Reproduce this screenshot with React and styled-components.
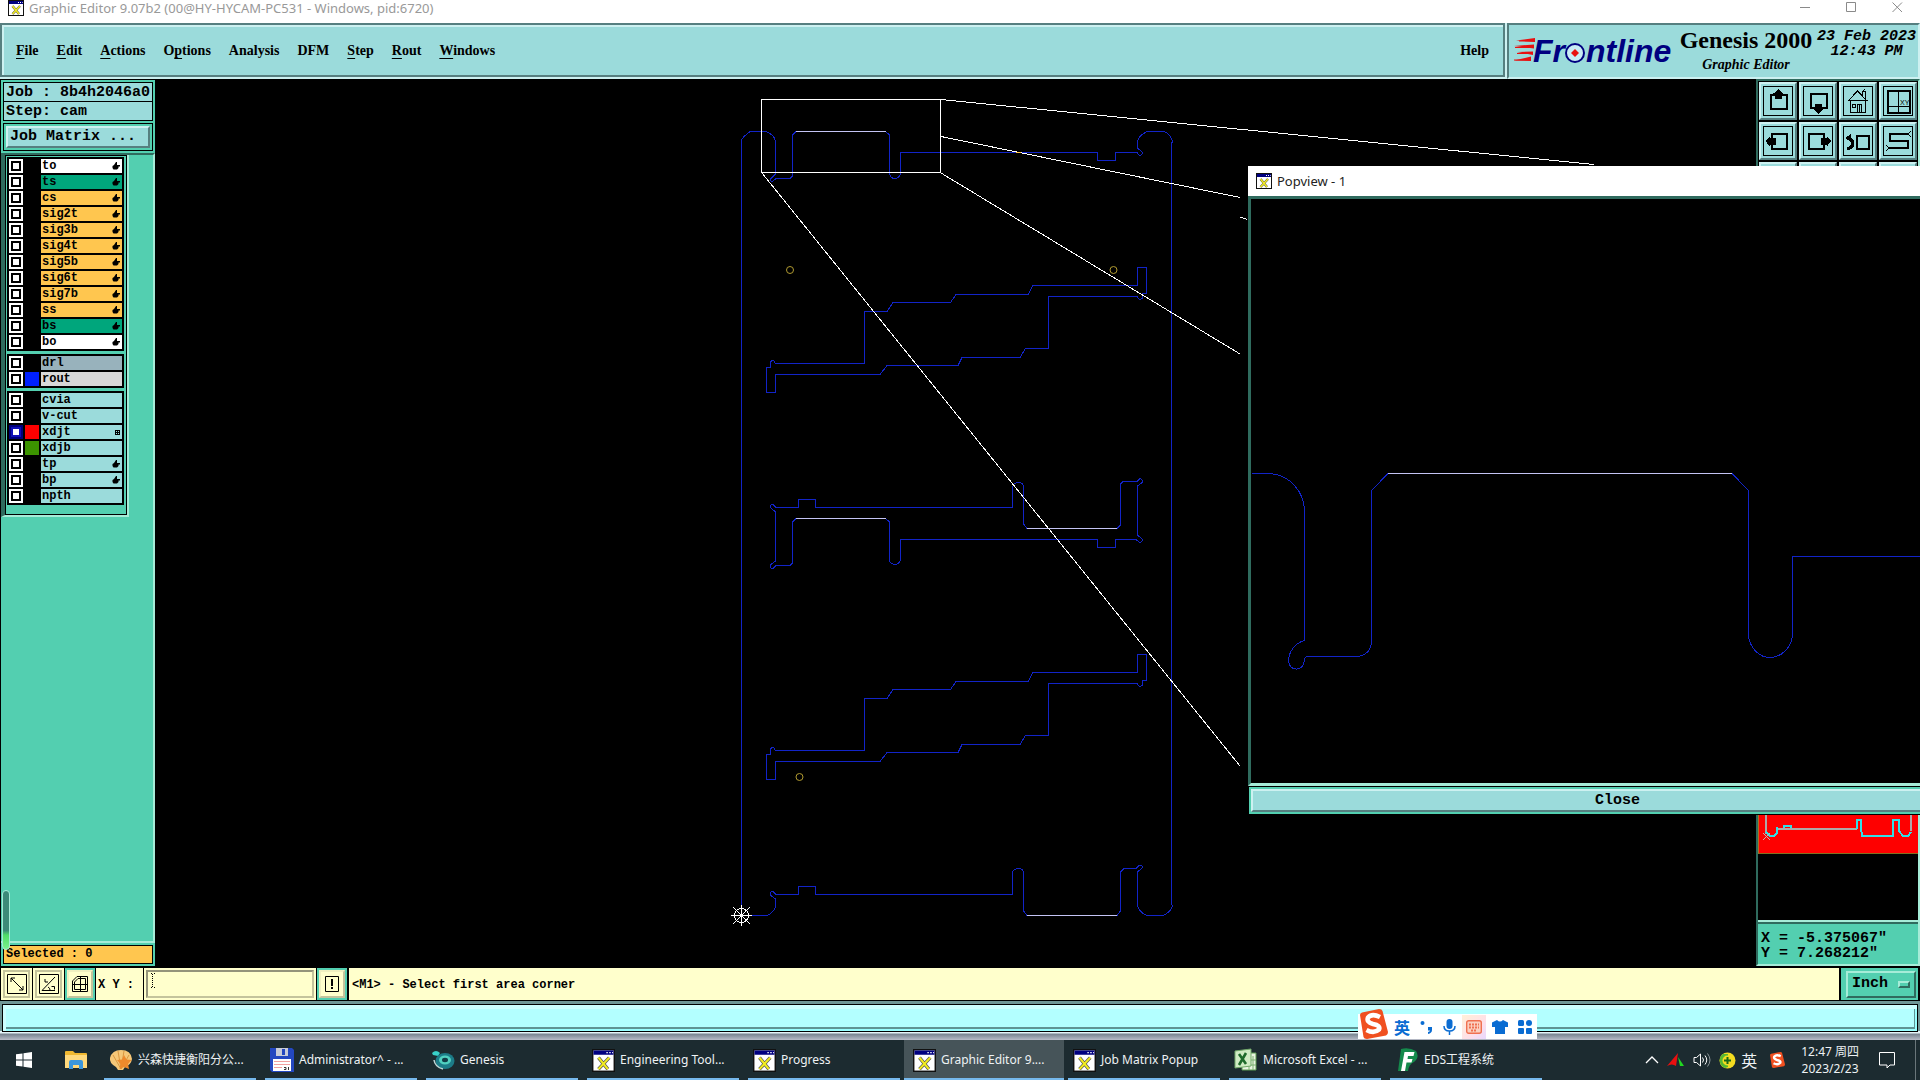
import React, { useState } from "react";
import styled, { createGlobalStyle, css } from "styled-components";

const c = {
  aqua: "#9bdbdb",
  aquaLight: "#cdf1f1",
  aquaDark: "#567f80",
  teal: "#53cfb0",
  tealLight: "#a6ecd8",
  tealDark: "#2f6b5e",
  orange: "#ffc64f",
  green: "#00a67c",
  cream: "#ffffcc",
  creamDark: "#c4c49c",
  trace: "#1224c8",
  pick: "#c4c4f4",
  navy: "#000080",
  bar: "#1c2b30",
};

const ui = `"Noto Sans", "Noto Sans CJK SC", sans-serif`;
const mono = `"Liberation Mono", monospace`;
const serif = `"Liberation Serif", serif`;

const Global = createGlobalStyle`
  * { box-sizing: border-box; }
  html, body, #root { height: 100%; margin: 0; }
  body { background: #000; overflow: hidden; }
  button, input, select { font: inherit; color: inherit; margin: 0; padding: 0; border: 0; border-radius: 0; background: none; }
  svg { display: block; }
`;

const raised = (light, dark, w = 2) => css`
  border: ${w}px solid;
  border-color: ${light} ${dark} ${dark} ${light};
`;

const Screen = styled.div`
  display: flex;
  flex-direction: column;
  height: 100%;
  min-height: 640px;
  color: #000;
  font: 12px/16px ${ui};
`;

/* window title */
const TitleBar = styled.header`
  display: flex;
  justify-content: space-between;
  height: 23px;
  padding: 0 17px 0 8px;
  background: #fff;
  color: #999;
`;
const TitleName = styled.h1`
  display: flex;
  gap: 5px;
  margin: 0;
  font: 13px/16px ${ui};
`;
const TitleButtons = styled.div`
  display: flex;
  gap: 35px;
`;
const TitleButton = styled.button`
  width: 11px;
  height: 15px;
`;

/* menu row */
const MenuRow = styled.div`
  display: flex;
  height: 56px;
  background: ${c.aquaLight};
`;
const MenuBar = styled.nav`
  flex: 1;
  display: flex;
  align-items: center;
  gap: 18px;
  padding: 2px 14px 0;
  margin: 0 2px 2px 0;
  background: ${c.aqua};
  border: 2px solid ${c.aquaDark};
  box-shadow: inset 2px 2px 0 ${c.aquaLight};
`;
const MenuButton = styled.button`
  font: bold 14px/20px ${serif};
  margin-left: ${(p) => (p.$end ? "auto" : "0")};
  u { text-underline-offset: 3px; }
`;
const Brand = styled.section`
  display: flex;
  width: 413px;
  padding: 0 2px 0 4px;
  background: ${c.aqua};
  border: 2px solid;
  border-color: ${c.aquaDark} ${c.aquaLight} ${c.aquaLight} ${c.aquaDark};
`;
const BrandText = styled.div`
  flex: 1;
  text-align: center;
`;
const Product = styled.div`
  font: bold 24px/30px ${serif};
  white-space: nowrap;
`;
const Module = styled.div`
  font: italic bold 14px/20px ${serif};
`;
const Clock = styled.div`
  padding-top: 4px;
  font: italic bold 15px/15px ${mono};
  text-align: center;
  white-space: nowrap;
`;

/* main area */
const Main = styled.main`
  position: relative;
  flex: 1;
  display: flex;
  min-height: 0;
  overflow: hidden;
  background: #000;
`;
const Side = styled.aside`
  display: flex;
  flex-direction: column;
  width: 154px;
  margin: 1px 0 2px 1px;
  background: ${c.teal};
  position: relative;
`;
const JobInfo = styled.div`
  margin: 2px 2px 0;
  border: 1px solid #000;
  background: ${c.aqua};
  font: bold 15px/20px ${mono};
  white-space: nowrap;
  div { height: 18px; padding-left: 2px; }
  div + div { border-top: 1px solid #000; height: 19px; }
`;
const MatrixFrame = styled.div`
  margin: 2px;
  padding: 2px;
  border: 1px solid #000;
`;
const MatrixButton = styled.button`
  display: block;
  width: 100%;
  height: 22px;
  padding-left: 2px;
  background: ${c.aqua};
  ${raised(c.aquaLight, c.aquaDark)}
  font: bold 15px/18px ${mono};
  text-align: left;
`;
const LayerArea = styled.div`
  flex: 1;
  border-top: 2px solid ${c.tealDark};
  border-right: 2px solid ${c.tealLight};
  border-bottom: 2px solid ${c.tealLight};
`;
const LayerPanel = styled.div`
  width: 128px;
  border-left: 4px solid ${c.tealDark};
  border-right: 2px solid ${c.tealLight};
  border-bottom: 2px solid ${c.tealLight};
`;
const LayerInner = styled.div`
  display: flex;
  flex-direction: column;
  gap: 3px;
  padding: 1px 2px 9px 1px;
  border: 1px solid #000;
`;
const LayerGroup = styled.ul`
  display: flex;
  flex-direction: column;
  gap: 2px;
  margin: 0;
  padding: 2px;
  list-style: none;
  background: #000;
`;
const LayerRow = styled.li`
  display: flex;
  gap: 2px;
  height: 14px;
`;
const LayerTick = styled.input`
  appearance: none;
  width: 14px;
  height: 14px;
  background: #fff;
  border: 2px solid #fff;
  box-shadow: inset 0 0 0 2px #000;
  &:checked {
    border-color: #00007c;
    box-shadow: inset 0 0 0 2px #1010b8;
  }
`;
const LayerColour = styled.span`
  width: 14px;
  background: ${(p) => p.$fill};
`;
const LayerName = styled.label`
  flex: 1;
  display: flex;
  align-items: center;
  justify-content: space-between;
  padding: 0 2px 0 1px;
  background: ${(p) => p.$fill};
  font: bold 12px/14px ${mono};
`;
const Selected = styled.div`
  margin: 2px;
  padding-left: 2px;
  height: 19px;
  border: 1px solid #000;
  background: ${c.orange};
  font: bold 12px/17px ${mono};
`;
const Gauge = styled.div`
  position: absolute;
  left: 1px;
  bottom: 16px;
  width: 8px;
  height: 60px;
  border: 1px solid ${c.tealLight};
  border-radius: 4px;
  background: linear-gradient(#3c8a78 68%, #4fdc68 76%, #7cf08c);
`;
const CanvasArea = styled.section`
  flex: 1;
  min-width: 0;
  overflow: hidden;
`;
const Right = styled.aside`
  display: flex;
  flex-direction: column;
  width: 164px;
  margin-bottom: 2px;
  border-left: 2px solid ${c.tealDark};
  border-right: 2px solid ${c.tealLight};
  border-bottom: 2px solid ${c.tealLight};
  border-top: 2px solid ${c.tealDark};
`;
const Tools = styled.div`
  display: grid;
  grid-template-columns: repeat(4, 38px);
  gap: 2px;
  padding: 1px;
`;
const ToolButton = styled.button`
  width: 38px;
  height: 38px;
  background: ${c.aqua};
  ${raised(c.aquaLight, c.aquaDark)}
  svg { margin: -2px; }
`;
const Overview = styled.div`
  flex: 1;
  min-height: 0;
  display: flex;
  flex-direction: column;
  justify-content: flex-end;
  border-bottom: 2px solid ${c.tealLight};
`;
const Thumb = styled.div`
  height: 120px;
  margin-bottom: 66px;
  background: #fe0000;
  border-left: 1px solid #b07020;
  border-bottom: 1px solid #807020;
`;
const Coords = styled.div`
  height: 42px;
  padding: 7px 0 0 3px;
  background: ${c.teal};
  border-top: 2px solid ${c.tealDark};
  font: bold 15px/15px ${mono};
  white-space: pre;
`;

/* popup window */
const Popup = styled.section`
  position: absolute;
  left: 65%;
  top: 87px;
  width: 738px;
  background: #000;
`;
const PopupTitle = styled.h2`
  display: flex;
  align-items: center;
  gap: 5px;
  height: 30px;
  margin: 0;
  padding-left: 8px;
  background: #fff;
  color: #222;
  font: 13px/16px ${ui};
`;
const PopupView = styled.div`
  height: 590px;
  border-top: 3px solid ${c.tealDark};
  border-left: 3px solid ${c.tealDark};
  border-bottom: 3px solid ${c.tealLight};
`;
const PopupFoot = styled.div`
  margin: 1px 0 1px 1px;
  padding: 2px;
  background: ${c.teal};
`;
const CloseButton = styled.button`
  display: block;
  width: 100%;
  height: 23px;
  padding-top: 1px;
  background: ${c.aqua};
  ${raised(c.aquaLight, c.aquaDark)}
  font: bold 15px/18px ${mono};
`;

/* command line */
const Command = styled.div`
  display: flex;
  gap: 1px;
  height: 33px;
  padding: 0 2px 1px 1px;
  background: #000;
  font: bold 12px/16px ${mono};
`;
const CommandButton = styled.button`
  width: ${(p) => (p.$teal ? "30px" : "31px")};
  background: ${c.cream};
  border: 2px solid ${(p) => (p.$teal ? c.teal : c.cream)};
  padding: 0;
  span {
    display: grid;
    place-items: center;
    height: 28px;
    ${raised("#f0f0c0", c.creamDark)}
    ${(p) => !p.$teal && css`border-color: ${c.creamDark};`}
  }
`;
const XyLabel = styled.label`
  width: 47px;
  padding: 9px 0 0 2px;
  background: ${c.cream};
`;
const XyField = styled.div`
  position: relative;
  display: flex;
  width: 172px;
  padding: 2px;
  background: ${c.cream};
  svg { position: absolute; left: 6px; top: 5px; pointer-events: none; }
`;
const XyBox = styled.input`
  flex: 1;
  min-width: 0;
  padding: 0 5px;
  border: 2px solid;
  border-color: #94947a ${c.creamDark} ${c.creamDark} #94947a;
  outline: none;
`;
const Prompt = styled.output`
  flex: 1;
  margin: 0 1px;
  padding: 9px 3px 0;
  background: ${c.cream};
`;
const UnitBox = styled.div`
  display: flex;
  align-items: center;
  width: 77px;
  padding: 2px 2px 2px 5px;
  background: ${c.teal};
`;
const UnitField = styled.div`
  flex: 1;
  display: flex;
  align-items: center;
  height: 27px;
  padding: 0 4px;
  ${raised(c.tealLight, c.tealDark)}
  select {
    flex: 1;
    min-width: 0;
    appearance: none;
    font: bold 15px/20px ${mono};
  }
`;
const UnitMark = styled.span`
  width: 12px;
  height: 7px;
  ${raised(c.tealLight, c.tealDark)}
`;

const MessageRow = styled.div`
  position: relative;
  height: 39px;
  padding: 2px;
  background: linear-gradient(#6f9696 0 30px, #e4f4f8 30px 32px, #788490 33px, #b8bcc8 100%);
`;
const MessageBar = styled.div`
  height: 28px;
  margin-top: 1px;
  background: #b3ffff;
  border: 1px solid #000;
  box-shadow: inset 3px 4px 0 #ccffff, inset -2px -2px 0 #9ff, inset -3px -4px 0 #5f9494;
`;
const ImeBar = styled.div`
  position: absolute;
  right: 383px;
  bottom: 1px;
  display: flex;
  align-items: center;
  gap: 10px;
  height: 25px;
  padding: 0 5px 0 36px;
  background: #fff;
  color: #0a6cd2;
  font: bold 16px/24px "Noto Sans CJK SC", sans-serif;
`;
const ImeLogo = styled.div`
  position: absolute;
  left: 0;
  bottom: 0;
`;
const ImeKey = styled.span`
  padding: 5px 4px;
  margin: 0 -4px;
  background: linear-gradient(135deg, #fff0d8, #ffe0e8 60%, #e8d8ff);
`;

/* taskbar */
const Taskbar = styled.footer`
  display: flex;
  height: 40px;
  background: ${c.bar};
  color: #eef2f4;
  font: 12px/16px ${ui};
`;
const Launch = styled.button`
  display: grid;
  place-items: center;
  width: 52px;
  padding-right: 5px;
`;
const Tasks = styled.div`
  flex: 1;
  display: flex;
  min-width: 0;
  overflow: hidden;
`;
const Task = styled.button`
  display: flex;
  align-items: center;
  gap: 5px;
  flex: 0 0 ${(p) => (p.$active ? "160px" : "152px")};
  margin-right: ${(p) => (p.$active ? "4px" : "9px")};
  margin-left: ${(p) => (p.$active ? "-5px" : "0")};
  padding: 2px 5px 0;
  padding-left: ${(p) => (p.$active ? "9px" : "5px")};
  white-space: nowrap;
  background: ${(p) => (p.$active ? "#465459" : "none")};
  border-bottom: 2px solid #76b9ed;
  svg { flex: none; }
`;
const Tray = styled.div`
  display: flex;
  align-items: center;
  gap: 8px;
  padding-right: 4px;
`;
const ImeState = styled.span`
  margin: 0 4px 0 -3px;
  font: 16px/20px "Noto Sans CJK SC", sans-serif;
`;
const Time = styled.div`
  margin: 0 12px 0 8px;
  text-align: center;
  line-height: 17px;
`;
const Notice = styled.button`
  padding-right: 20px;
  border-right: 1px solid #6a767a;
  height: 100%;
`;

/* ---------- icons ---------- */
const XIcon = ({ s = 16 }) => (
  <svg width={s} height={s} viewBox="0 0 16 16" aria-hidden="true">
    <rect width="16" height="16" fill="#111" />
    <rect x="1" y="1" width="14" height="14" fill="#fff" />
    <rect x="1" y="1" width="14" height="3" fill={c.navy} />
    <path d="M10 2.5h1M12 2.5h1M14 2.5h.6" stroke="#fff" />
    <path d="M4.5 6l6.5 8M12 6l-7.5 8" stroke="#555" strokeWidth="2.4" />
    <path d="M4.5 6l6.5 8M12 6l-7.5 8" stroke="#f2ec20" strokeWidth="1.5" />
  </svg>
);

const Hand = () => (
  <svg width="8" height="8" viewBox="0 0 8 8" aria-hidden="true">
    <path d="M4 0H5V3H8V4.500H6.500V6L5 7.500H1.500L0.500 6V4L2 3z" fill="#000" />
  </svg>
);
const GridMark = () => (
  <svg width="5" height="5" viewBox="0 0 5 5" shapeRendering="crispEdges" aria-hidden="true">
    <path d="M.5 .5H4.5V4.5H.5zM2.5 0V5M0 2.5H5" fill="none" stroke="#000" />
  </svg>
);

const toolDrawings = {
  "Pan up": <><path d="M12 13h16v14H12z" strokeWidth="2" /><path d="M19.500 7l5 4.500h-1.500V17h-7v-5.500H14.500z" fill="#000" stroke="none" /></>,
  "Pan down": <><path d="M12 12h16v14H12z" strokeWidth="2" /><path d="M19.500 32l5-5h-1.500V22h-7v5H14.500z" fill="#000" stroke="none" /></>,
  Home: <path d="M9 18.500h20M9 19L18.500 9L28 19M11.500 18.500V30.500H26.500V18.500M23.500 14V9.500h3V17M24 9l2-2M18.500 30V22.500h4V30M20.500 23v7M13.500 22h3v3h-3z" />,
  "Zoom window": <><path d="M9 9h22v22H9z" strokeWidth="2" /><path d="M19.500 9v22M9 24.500h22" /><text x="21" y="23" fontSize="7" fontFamily="Liberation Sans" fill="#000" stroke="none">XY</text></>,
  "Pan left": <><path d="M13 12h15v15H13z" strokeWidth="2" /><path d="M6.500 19l4.500-5v2h6v7h-6v2z" fill="#000" stroke="none" /></>,
  "Pan right": <><path d="M10 12h15v15H10z" strokeWidth="2" /><path d="M32 19l-4.500-5v2h-6v7h6v2z" fill="#000" stroke="none" /></>,
  "Previous view": <><path d="M18 14h12v13H18z" strokeWidth="2" /><path d="M8 26h3q3-2 3-5t-4-5" strokeWidth="3" /><path d="M6.500 16l5-4v8z" fill="#000" stroke="none" /></>,
  Snap: <><path d="M30 12H11v7H29v7H10" strokeWidth="2" /><path d="M29 12l3-3M29 12l3 3M10 26l-3-3M10 26l-3 3" /></>,
  "Zoom in": <path d="M12 12h14v14H12z" strokeWidth="2" />,
  "Zoom out": <path d="M12 12h14v14H12z" strokeWidth="2" />,
  Fit: <path d="M12 12h14v14H12z" strokeWidth="2" />,
  Redraw: <path d="M12 12h14v14H12z" strokeWidth="2" />,
};

const ToolArt = ({ children }) => (
  <svg width="38" height="38" viewBox="0 0 38 38" fill="none" stroke="#000" shapeRendering="crispEdges" aria-hidden="true">
    <path d="M4.500 4.500h29v29h-29z" />
    {children}
  </svg>
);

const CommandArt = ({ d }) => (
  <svg width="20" height="20" viewBox="0 0 20 20" fill="none" stroke="#000" aria-hidden="true">
    <path d={d} />
  </svg>
);

const Logo = () => (
  <svg width="162" height="50" viewBox="0 0 162 50" role="img" aria-label="Frontline">
    <g fill="#e81010">
      <path d="M3 15.500L22 13V17zM1 21L21 19.500V23.500zM4 27L20 26.500V30zM1 35.500L18 31.500V36z" />
      <path d="M6 16H22M2 22.500H21M4 28.500H19M1 35H18" stroke="#e81010" />
    </g>
    <g fontFamily="Liberation Sans, sans-serif" fontWeight="bold" fontStyle="italic" fontSize="32" fill={c.navy}>
      <text x="20" y="37">Fr</text>
      <text x="73" y="37">ntline</text>
    </g>
    <ellipse cx="62" cy="28" rx="9" ry="9" fill="#c8ecf4" stroke={c.navy} strokeWidth="2" />
    <path d="M62 24L66 28L62 32L58 28z" fill="#e81010" />
  </svg>
);

const S = ({ s = 16 }) => (
  <svg width={s} height={s} viewBox="0 0 30 30" aria-hidden="true">
    <path d="M2 6Q2 4 4 3.500L21 0Q24 0 24.500 2L30 23Q30 26 28 26.500L9 30Q6 30 5.500 28z" fill="#f05020" />
    <path d="M22 8Q14 4 10 8.500Q8 13 15 15Q23 16.500 21 20.500Q16 25 8.500 21" fill="none" stroke="#fff" strokeWidth="4.500" />
  </svg>
);

const taskIcons = {
  shell: (
    <svg width="24" height="24" viewBox="0 0 24 24">
      <path d="M12 2Q22 2 23 11Q22 17 16 19L14 22H9L7 19Q0 15 1 10Q3 2 12 2z" fill="#f6c878" />
      <path d="M12 21L4 7M12 21L9 3M12 21L15 3M12 21L20 7" stroke="#d89840" />
      <path d="M15 7l2.500 4.500 5 .5-3.500 4 1 5-5-2-4.500 2 1-5-3.500-4 5-.5z" fill="#ee8a2c" />
    </svg>
  ),
  floppy: (
    <svg width="24" height="24" viewBox="0 0 24 24">
      <path d="M0 0H22L24 2V24H2L0 22z" fill="#2448c0" />
      <path d="M6 0H18V8H6z" fill="#c8ccd8" /><path d="M12 1h3v6h-3z" fill="#2448c0" />
      <path d="M3 11H21V23H3z" fill="#fff" /><path d="M4 13.500H20M4 16.500H20M4 19.500H12" stroke="#f0a0a0" />
      <path d="M14 19.500h2v2h-2M18.500 19v3" stroke="#333" fill="none" />
    </svg>
  ),
  genesis: (
    <svg width="24" height="24" viewBox="0 0 24 24">
      <path d="M1 5Q5 1 9 5L7 8L2 7z" fill="#38d0c8" />
      <ellipse cx="14" cy="13" rx="9.500" ry="8" fill="#1c7c88" />
      <ellipse cx="14" cy="12" rx="6" ry="4.500" fill="#50d0c0" />
      <ellipse cx="14" cy="12" rx="3" ry="2.200" fill="#123c48" />
      <path d="M3 12Q4 19 12 21" stroke="#c0d8d8" strokeWidth="1.500" fill="none" />
    </svg>
  ),
  x: <XIcon s={23} />,
  excel: (
    <svg width="24" height="24" viewBox="0 0 24 24">
      <path d="M8 5H22V22H8z" fill="#e8f4e0" stroke="#5a9a50" />
      <path d="M15 8v14M19 8v14M9 12H22M9 17H22" stroke="#7ab070" />
      <path d="M1 3L17 1V18L1 20z" fill="#d0ecc4" stroke="#70a868" />
      <path d="M5 6L12 16M12 5L5 17" stroke="#1f6b2c" strokeWidth="2.600" />
    </svg>
  ),
  eds: (
    <svg width="24" height="24" viewBox="0 0 24 24">
      <path d="M6 1Q14-1 21 3Q25 9 19 14Q14 16 13 23H3z" fill="#158a4c" />
      <path d="M6 23L9.500 4H19.500L18.500 8H13L12.500 11H17.500L16.500 14.500H11.500L10 23z" fill="#fff" />
    </svg>
  ),
};

/* ---------- board drawing ---------- */
const rib =
  "M770.500 362Q773 358 775.500 363.500H864.500V311.500H887L893 302.500H950.500L956 294.500H1028L1033 285.500H1137.500V267.500H1146.500V293.500H1142.500V298Q1139 301 1137 296.500H1048.500V348.500H1025.500L1020 357.500H962L958 365.500H887L880 374.500H775.500V392.500H766.500V367.500H770.500z";

const Board = () => (
  <svg width="100%" height="100%" aria-label="Board outline">
    <g transform="translate(-155 -79)" fill="none" shapeRendering="crispEdges" stroke={c.trace}>
      <path d="M741.500 915.500V142Q740 139 750 131.500H766Q775 135 775.500 142V174L771 178.500Q770 182 773 181L776 178.500H790L792.500 176V135L796 131.500M885.500 131.500L889.500 135V173Q890 178.500 895 178.500Q900 178 900.500 173V152.500H1097.500V160.500H1115V152.500H1137L1139 155Q1143 156 1142 152L1137.500 148V142Q1138 136 1147 131.500H1164Q1171 134 1172.500 142L1171.500 143V904L1172.500 906Q1171 912 1163 915.500H1147Q1139 912 1137.500 906V872L1142 868Q1143 864 1139 865.500L1136 868.500H1124L1120.500 872V911L1117 915.500M1027 915.500L1023.500 911V872Q1022 868 1018 868.500Q1013 869 1012.500 873V894.500H815.500V886.500H798.500V894.500H776L773 891.500Q769 892 771 895.500L775.500 899V907Q773 913 767 915.500H742" />
      <path d="M773 504.500L776 507.500H798.500V499.500H815.500V507.500H1012.500V488Q1013 483 1018 482.500Q1022 482 1023.500 486V524L1027 528.500M1117 528.500L1120.500 525V484L1123 481.500H1137L1140 478.500Q1144 480 1142 482.500L1137.500 486V535L1142 539Q1143 543 1139 542L1136 539.500H1115V547.500H1097.500V539.500H900.500V559Q900 564 895 564.500Q890 564 889.500 560V522L885.500 518.500M796 518.500L792.500 522V563L790 565.500H776L773 568.500Q769 568 771 564.500L775.500 561V512L771 508Q770 504 773 504.500" />
      <path d={rib} />
      <path d={rib} transform="translate(0 387)" />
      <path stroke={c.pick} d="M796 131.500H886M796 518.500H886M1027 528.500H1117M1027 915.500H1117" />
      <g stroke="#b09a30" shapeRendering="auto">
        <circle cx="790" cy="270" r="3.500" /><circle cx="1113.500" cy="270" r="3.500" /><circle cx="799.500" cy="777" r="3.500" />
      </g>
      <g stroke="#fff">
        <path d="M761.500 99.500H940.500V172.500H761.500z" />
        <path d="M941 99.500L1594 164.500M941 136.500L1240 197.500M1240 217L1247 219.500M941 173L1240 354M762 173L1240 766" />
        <path d="M731 915.500H752M741.500 905V926M733 907L750 924M750 907L733 924" />
        <circle cx="741.500" cy="915.500" r="7" />
      </g>
      <path stroke={c.orange} d="M1016 152.500H1021" />
    </g>
  </svg>
);

const PopDrawing = () => (
  <svg width="100%" height="100%" aria-label="Magnified outline">
    <g transform="translate(-1251 -199)" fill="none" shapeRendering="crispEdges" stroke={c.trace}>
      <path d="M1252 473.500H1268C1290 474 1304.500 492 1304.500 512V640.500C1295 643 1288.500 652 1288.500 661C1289 672 1304 672 1304.500 660Q1304.500 657 1307 656.500H1358Q1371 654 1371.500 642V490.500L1388 473.500M1732 473.500L1748.500 490.500V636C1750 648 1759 657.500 1770 657.500S1791 648 1792.500 636V556.500H1990" />
      <path stroke={c.pick} d="M1388 473.500H1732" />
    </g>
  </svg>
);

const ThumbDrawing = () => (
  <svg width="160" height="119" aria-hidden="true">
    <g transform="translate(-1759 -735)" fill="none" strokeWidth="2" shapeRendering="crispEdges">
      <path stroke="#b0a8a8" d="M1766 760V835M1911 760V832M1776 830H1857" />
      <path stroke="#30e0e8" d="M1766 833L1770 837H1774L1777 834V828M1784 829V827H1791V829M1857 830V821H1861V829L1862 837H1893V821H1900M1899 821V832L1903 837H1908L1911 833" />
      <path stroke="#c8b0b0" strokeWidth="1" d="M1763 834l7 7M1770 834l-7 7" />
    </g>
  </svg>
);

/* ---------- data ---------- */
const menus = [
  ["", "F", "ile"], ["", "E", "dit"], ["", "A", "ctions"], ["O", "p", "tions"], ["Analysis", "", ""],
  ["DFM", "", ""], ["", "S", "tep"], ["", "R", "out"], ["", "W", "indows"],
];

const groups = [
  [
    ["to", "#fff", "hand"], ["ts", c.green, "hand"], ["cs", c.orange, "hand"], ["sig2t", c.orange, "hand"],
    ["sig3b", c.orange, "hand"], ["sig4t", c.orange, "hand"], ["sig5b", c.orange, "hand"], ["sig6t", c.orange, "hand"],
    ["sig7b", c.orange, "hand"], ["ss", c.orange, "hand"], ["bs", c.green, "hand"], ["bo", "#fff", "hand"],
  ],
  [["drl", "#98b2bc"], ["rout", "#d8d8d8", null, "#0020ff"]],
  [
    ["cvia", c.aqua], ["v-cut", c.aqua], ["xdjt", c.aqua, "grid", "#fe0000"], ["xdjb", c.aqua, null, "#3c9400"],
    ["tp", c.aqua, "hand"], ["bp", c.aqua, "hand"], ["npth", c.aqua],
  ],
];

const tasks = [
  ["shell", "兴森快捷衡阳分公..."], ["floppy", "Administrator^ - ..."], ["genesis", "Genesis"],
  ["x", "Engineering Tool..."], ["x", "Progress"], ["x", "Graphic Editor 9....", true],
  ["x", "Job Matrix Popup"], ["excel", "Microsoft Excel - ..."], ["eds", "EDS工程系统"],
];

export default function App() {
  const [shown, setShown] = useState({ xdjt: true });
  const toggle = (name) => setShown((s) => ({ ...s, [name]: !s[name] }));

  return (
    <Screen>
      <Global />
      <TitleBar>
        <TitleName>
          <XIcon />
          Graphic Editor 9.07b2 (00@HY-HYCAM-PC531 - Windows, pid:6720)
        </TitleName>
        <TitleButtons>
          {[["Minimize", "M0 7.500H10"], ["Maximize", "M.5 2.500H9.500V11.500H.5z"], ["Close window", "M.5 2.500L10 12M10 2.500L.5 12"]].map(([n, d]) => (
            <TitleButton key={n} aria-label={n}>
              <svg width="11" height="15" fill="none" stroke="#8a8a8a"><path d={d} /></svg>
            </TitleButton>
          ))}
        </TitleButtons>
      </TitleBar>

      <MenuRow>
        <MenuBar>
          {menus.map(([a, u, b]) => (
            <MenuButton key={a + u + b}>{a}{u && <u>{u}</u>}{b}</MenuButton>
          ))}
          <MenuButton $end>Help</MenuButton>
        </MenuBar>
        <Brand>
          <Logo />
          <BrandText>
            <Product>Genesis 2000</Product>
            <Module>Graphic Editor</Module>
          </BrandText>
          <Clock>23 Feb 2023<br />12:43 PM</Clock>
        </Brand>
      </MenuRow>

      <Main>
        <Side>
          <JobInfo>
            <div>Job : 8b4h2046a0</div>
            <div>Step: cam</div>
          </JobInfo>
          <MatrixFrame><MatrixButton>Job Matrix ...</MatrixButton></MatrixFrame>
          <LayerArea>
            <LayerPanel>
              <LayerInner>
                {groups.map((rows, i) => (
                  <LayerGroup key={i}>
                    {rows.map(([name, fill, mark, colour]) => (
                      <LayerRow key={name}>
                        <LayerTick type="checkbox" id={`layer-${name}`} checked={!!shown[name]} onChange={() => toggle(name)} />
                        <LayerColour $fill={colour || "#000"} />
                        <LayerName htmlFor={`layer-${name}`} $fill={fill}>
                          {name}
                          {mark === "hand" && <Hand />}
                          {mark === "grid" && <GridMark />}
                        </LayerName>
                      </LayerRow>
                    ))}
                  </LayerGroup>
                ))}
              </LayerInner>
            </LayerPanel>
          </LayerArea>
          <Selected>Selected : 0</Selected>
          <Gauge />
        </Side>

        <CanvasArea><Board /></CanvasArea>

        <Right>
          <Tools>
            {Object.entries(toolDrawings).map(([name, art]) => (
              <ToolButton key={name} aria-label={name}><ToolArt>{art}</ToolArt></ToolButton>
            ))}
          </Tools>
          <Overview><Thumb><ThumbDrawing /></Thumb></Overview>
          <Coords>{'X = -5.375067"\nY = 7.268212"'}</Coords>
        </Right>

        <Popup aria-label="Popview">
          <PopupTitle><XIcon />Popview - 1</PopupTitle>
          <PopupView><PopDrawing /></PopupView>
          <PopupFoot><CloseButton>Close</CloseButton></PopupFoot>
        </Popup>
      </Main>

      <Command>
        <CommandButton aria-label="Area select"><span><CommandArt d="M.5 .5h19v19h-19zM4 4l12 12M4 8V4h4M12 16h4v-4" /></span></CommandButton>
        <CommandButton aria-label="Angle"><span><CommandArt d="M.5 .5h19v19h-19zM3 16.500L16 3M3 16.500H16M6 5v3h3M9 13q2 1 2 3M12.500 12.500h3v3" /></span></CommandButton>
        <CommandButton $teal aria-label="Grid"><span><CommandArt d="M2.500 7L7 2.500H17.500V17.500H2.500zM4.500 8L8 4.500H15.500V15.500H4.500zM10.500 3v14M3 10.500h14" /></span></CommandButton>
        <XyLabel htmlFor="xy">X Y :</XyLabel>
        <XyField>
          <XyBox id="xy" type="text" />
          <svg width="5" height="15" fill="none" stroke="#000" shapeRendering="crispEdges" aria-hidden="true">
            <path d="M.5 .5h1M3.5 .5h1M.5 14.500h1M3.500 14.500h1" /><path d="M2.500 1V14" strokeDasharray="1 1" />
          </svg>
        </XyField>
        <CommandButton $teal aria-label="Help on command"><span><CommandArt d="M3.500 2.500h13v15h-13zM9.500 5v7M10.500 5v7M9 14.500h2M9 13.500h2" /></span></CommandButton>
        <Prompt>&lt;M1&gt; - Select first area corner</Prompt>
        <UnitBox>
          <UnitField>
            <select aria-label="Units" defaultValue="Inch"><option>Inch</option><option>MM</option></select>
            <UnitMark />
          </UnitField>
        </UnitBox>
      </Command>

      <MessageRow>
        <MessageBar />
        <ImeBar>
          <ImeLogo><S s={30} /></ImeLogo>
          <span>英</span>
          <svg width="13" height="14" viewBox="0 0 13 14"><circle cx="2.500" cy="3" r="2" fill="#0a6cd2" /><path d="M8 7h4v3q0 3-4 4v-2q2-.5 2-1.500H8z" fill="#0a6cd2" /></svg>
          <svg width="13" height="18" viewBox="0 0 13 18"><rect x="3.500" y="1" width="6" height="10" rx="3" fill="#0a6cd2" /><path d="M1 8q0 5 5.500 5T12 8M6.500 13v4" fill="none" stroke="#0a6cd2" strokeWidth="1.500" /></svg>
          <ImeKey>
            <svg width="16" height="14" viewBox="0 0 16 14"><rect x=".7" y=".7" width="14.600" height="12.600" rx="2" fill="#fbd0c0" stroke="#f07050" strokeWidth="1.400" /><path d="M3 4.500h10M3 7.500h10M5 10.500h6" stroke="#f07050" strokeWidth="1.800" strokeDasharray="2 1" /></svg>
          </ImeKey>
          <svg width="16" height="14" viewBox="0 0 16 14"><path d="M5 0Q8 3 11 0L16 2.500V7H13V14H3V7H0V2.500z" fill="#0a6cd2" /></svg>
          <svg width="14" height="14" viewBox="0 0 14 14" fill="#0a6cd2"><rect width="6" height="6" rx="1.500" /><circle cx="11" cy="3" r="3" /><rect y="8" width="6" height="6" rx="1" /><rect x="8" y="8" width="6" height="6" rx="1" /></svg>
        </ImeBar>
      </MessageRow>

      <Taskbar>
        <Launch aria-label="Start">
          <svg width="16" height="16" viewBox="0 0 16 16" fill="#fff"><path d="M0 2.300L6.500 1.400V7.500H0zM7.500 1.200L16 0V7.500H7.500zM0 8.500H6.500V14.600L0 13.700zM7.500 8.500H16V16L7.500 14.800z" /></svg>
        </Launch>
        <Launch aria-label="File Explorer">
          <svg width="22" height="18" viewBox="0 0 22 18"><path d="M0 1Q0 0 1 0H8L10 2H21Q22 2 22 3V17H0z" fill="#f0b830" /><path d="M0 4H22V17H0z" fill="#ffd97c" /><path d="M4 18V11Q4 9 6 9H16Q18 9 18 11V18H14V14H8V18z" fill="#3a96dc" /></svg>
        </Launch>
        <Tasks>
          {tasks.map(([icon, text, active]) => (
            <Task key={text} $active={active}>{taskIcons[icon]}{text}</Task>
          ))}
        </Tasks>
        <Tray>
          <svg width="14" height="8" viewBox="0 0 14 8" fill="none" stroke="#fff" strokeWidth="1.300"><path d="M1 7L7 1L13 7" /></svg>
          <svg width="18" height="14" viewBox="0 0 18 14"><path d="M0 13L11 0L9 13Q5 10 0 13z" fill="#e81010" /><path d="M11 4L17 13H13z" fill="#20d820" /></svg>
          <svg width="18" height="16" viewBox="0 0 18 16" fill="none" stroke="#fff"><path d="M1 5.500H3.500L7.500 2V14L3.500 10.500H1z" /><path d="M9.500 5.500q2 2.500 0 5" /><path d="M12 3.500q3.500 4.500 0 9" /><path d="M14.500 1.500q5 6.500 0 13" stroke="#8a9498" /></svg>
          <svg width="17" height="17" viewBox="0 0 17 17"><circle cx="8.500" cy="8.500" r="8" fill="#f4dc20" /><path d="M4 2a8 8 0 0 0 2 14l3-1V2z" fill="#58b830" /><circle cx="8.500" cy="8.500" r="5" fill="#f4dc20" /><path d="M8.500 5v7M5 8.500h7" stroke="#186818" strokeWidth="2" /></svg>
          <ImeState>英</ImeState>
          <S s={16} />
          <Time>12:47 周四<br />2023/2/23</Time>
          <Notice aria-label="Notifications">
            <svg width="16" height="17" viewBox="0 0 16 17" fill="none" stroke="#fff"><path d="M.5 .5H15.500V13H11L8 16V13H.5z" /></svg>
          </Notice>
        </Tray>
      </Taskbar>
    </Screen>
  );
}
